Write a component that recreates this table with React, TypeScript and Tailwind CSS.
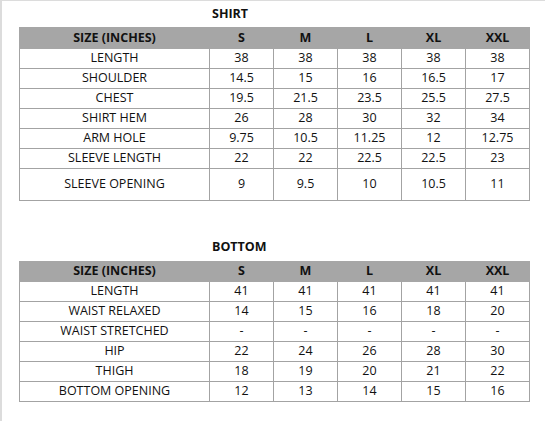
const sizes = ["S", "M", "L", "XL", "XXL"];

const shirt: [string, string[], string?][] = [
  ["LENGTH", ["38", "38", "38", "38", "38"]],
  ["SHOULDER", ["14.5", "15", "16", "16.5", "17"]],
  ["CHEST", ["19.5", "21.5", "23.5", "25.5", "27.5"]],
  ["SHIRT HEM", ["26", "28", "30", "32", "34"]],
  ["ARM HOLE", ["9.75", "10.5", "11.25", "12", "12.75"]],
  ["SLEEVE LENGTH", ["22", "22", "22.5", "22.5", "23"]],
  ["SLEEVE OPENING", ["9", "9.5", "10", "10.5", "11"], "tall"],
];

const bottom: [string, string[], string?][] = [
  ["LENGTH", ["41", "41", "41", "41", "41"]],
  ["WAIST RELAXED", ["14", "15", "16", "18", "20"]],
  ["WAIST STRETCHED", ["-", "-", "-", "-", "-"]],
  ["HIP", ["22", "24", "26", "28", "30"]],
  ["THIGH", ["18", "19", "20", "21", "22"]],
  ["BOTTOM OPENING", ["12", "13", "14", "15", "16"]],
];

function SizeTable({
  title,
  rows,
  top,
  head,
}: {
  title: string;
  rows: [string, string[], string?][];
  top: string;
  head: string;
}) {
  return (
    <section>
      <h2 className={`${top} flex items-center pl-[210px] text-[12.5px] font-bold text-[#111]`}>
        {title}
      </h2>
      <table className="ml-[17px] w-[511px] table-fixed border-collapse text-center text-[12.5px] text-[#111]">
        <colgroup>
          <col className="w-[190px]" />
          {sizes.map((s) => (
            <col key={s} className="w-[64px]" />
          ))}
        </colgroup>
        <thead>
          <tr className={`${head} bg-[#a6a6a6] font-bold`}>
            <th className="border border-[#a6a6a6] p-0">SIZE (INCHES)</th>
            {sizes.map((s) => (
              <th key={s} className="border border-[#a6a6a6] p-0">
                {s}
              </th>
            ))}
          </tr>
        </thead>
        <tbody>
          {rows.map(([label, values, tall]) => (
            <tr key={label} className={tall ? "h-[32px]" : "h-[20px]"}>
              <td className="border border-[#a3a3a3] p-0 leading-none">{label}</td>
              {values.map((v, i) => (
                <td key={i} className="border border-[#a3a3a3] p-0 leading-none">
                  {v}
                </td>
              ))}
            </tr>
          ))}
        </tbody>
      </table>
    </section>
  );
}

export default function App() {
  return (
    <div
      className="h-[421px] w-[545px] overflow-hidden border-t border-l-2 border-[#dcdcdc] bg-white"
      style={{ fontFamily: '"Open Sans", sans-serif' }}
    >
      <SizeTable title="SHIRT" rows={shirt} top="h-[26px] pt-px" head="h-[21px]" />
      <SizeTable title="BOTTOM" rows={bottom} top="mt-[32px] h-[28px]" head="h-[20px]" />
    </div>
  );
}
